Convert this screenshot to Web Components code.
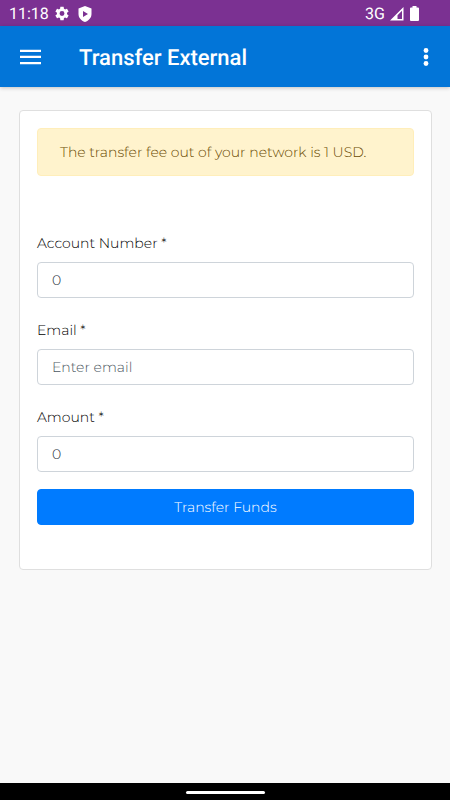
<!DOCTYPE html>
<html lang="en">
<head>
<meta charset="utf-8">
<meta name="viewport" content="width=device-width, initial-scale=1">
<title>Transfer External</title>
<style>
html, body { margin: 0; min-height: 100%; }
body { font-family: Montserrat, Inter, sans-serif; background: #f9f9f9; text-rendering: geometricPrecision; }
</style>
</head>
<body>
<transfer-app></transfer-app>
<script>
const define = (name, html, setup) => customElements.define(name, class extends HTMLElement {
  constructor() {
    super();
    this.attachShadow({ mode: 'open' }).innerHTML = html;
  }
  connectedCallback() { if (setup) setup(this, this.shadowRoot); }
});

define('status-bar', `
<style>
:host { display: flex; align-items: center; justify-content: space-between; box-sizing: border-box; height: 26px; padding: 1px 31px 0 9px; background: #7b3192; color: #fff; font: 16px/25px Roboto, sans-serif; }
div { display: flex; align-items: center; }
.left { gap: 6px; }
.right { gap: 4px; }
svg { display: block; fill: #fff; }
.shield { margin-left: 3px; }
.battery { margin-left: 2px; }
</style>
<div class="left"><span>11:18</span>
<svg width="14" height="15" viewBox="2 2 20 20"><path fill-rule="evenodd" d="M19.14 12.94c.04-.3.06-.61.06-.94s-.02-.64-.07-.94l2.03-1.58c.18-.14.23-.41.12-.61l-1.92-3.32c-.12-.22-.37-.29-.59-.22l-2.39.96c-.5-.38-1.03-.7-1.62-.94l-.36-2.54C14.36 2.57 14.16 2.4 13.92 2.4h-3.84c-.24 0-.43.17-.47.41l-.36 2.54c-.59.24-1.13.57-1.62.94l-2.39-.96c-.22-.08-.47 0-.59.22L2.74 8.87c-.12.21-.08.47.12.61l2.03 1.58c-.05.3-.09.63-.09.94s.02.64.07.94l-2.03 1.58c-.18.14-.23.41-.12.61l1.92 3.32c.12.22.37.29.59.22l2.39-.96c.5.38 1.03.7 1.62.94l.36 2.54c.05.24.24.41.48.41h3.84c.24 0 .44-.17.47-.41l.36-2.54c.59-.24 1.13-.56 1.62-.94l2.39.96c.22.08.47 0 .59-.22l1.92-3.32c.12-.22.07-.47-.12-.61zM12 15.500a3.500 3.500 0 1 1 0-7 3.500 3.500 0 0 1 0 7z"/></svg>
<svg class="shield" width="14" height="16" viewBox="0 0 14 16"><path fill-rule="evenodd" d="M7 0 13.500 2.400V8c0 3.800-2.500 6.500-6.500 8C3 14.500.5 11.800.5 8V2.400zM5 5v6L10 8z"/></svg></div>
<div class="right"><span>3G</span>
<svg width="15" height="15" viewBox="0 0 15 15"><path fill-rule="evenodd" d="M14.500 1v13.500H1zM13 4.800 8.500 9.300V13h4.500z"/></svg>
<svg class="battery" width="9" height="15" viewBox="0 0 9 15"><path d="M2.500 0h4v1.500H8q1 0 1 1V14q0 1-1 1H1q-1 0-1-1V2.500q0-1 1-1h1.500z"/></svg></div>`);

define('app-bar', `
<style>
:host { display: flex; align-items: center; box-sizing: border-box; height: 61px; padding: 0 14px 0 18px; background: #0275d8; color: #fff; box-shadow: 0 1px 4px rgba(0,0,0,.22); }
h1 { flex: 1; margin: 0 0 0 36px; padding-top: 4px; font: 500 22px/32px Roboto, sans-serif; }
button { display: flex; justify-content: center; border: 0; background: none; padding: 12px 0; cursor: pointer; }
.menu { width: 25px; } .more { width: 20px; }
svg { display: block; fill: #fff; }
</style>
<button class="menu" aria-label="Open menu"><svg width="21" height="16" viewBox="0 0 21 16"><path d="M0 .7h21v2.300H0zM0 6.800h21v2.300H0zM0 12.900h21v2.300H0z"/></svg></button>
<h1><slot></slot></h1>
<button class="more" aria-label="More options"><svg width="6" height="20" viewBox="0 0 6 20"><circle cx="3" cy="3.500" r="2.400"/><circle cx="3" cy="10" r="2.400"/><circle cx="3" cy="16.500" r="2.400"/></svg></button>`);

define('fee-alert', `
<style>
:host { display: block; box-sizing: border-box; padding: 13px 22px; border: 1px solid #ffeeba; border-radius: 4px; background: #fff3cd; color: #694900; font-size: 14px; line-height: 20px; }
</style><slot></slot>`);

define('form-field', `
<style>
:host { display: block; }
label { display: block; margin-bottom: 9px; color: #000; font-size: 14px; line-height: 20px; }
input { display: block; box-sizing: border-box; width: 100%; height: 36px; margin: 0; padding: 0 14px; border: 1px solid #ced4da; border-radius: 4px; background: #fff; color: #212b35; font: inherit; font-size: 14px; text-rendering: inherit; }
input::placeholder { color: #4c5761; opacity: 1; }
</style>
<label for="control"></label><input id="control">`, (host, root) => {
  root.querySelector('label').textContent = host.getAttribute('label');
  const input = root.querySelector('input');
  input.type = host.getAttribute('type') || 'text';
  input.value = host.getAttribute('value') || '';
  input.placeholder = host.getAttribute('placeholder') || '';
});

define('primary-button', `
<style>
:host { display: block; }
button { display: block; box-sizing: border-box; width: 100%; height: 36px; padding: 0; border: 1px solid #007bff; border-radius: 4px; background: #007bff; color: #fff; font: inherit; font-size: 14px; text-rendering: inherit; cursor: pointer; }
</style><button type="button"><slot></slot></button>`);

define('content-card', `
<style>
:host { display: block; padding: 17px 17px 44px; border: 1px solid #dfdfdf; border-radius: 4px; background: #fff; font-weight: 300; }
</style><slot></slot>`);

define('gesture-bar', `
<style>
:host { display: flex; align-items: center; justify-content: center; box-sizing: border-box; height: 17px; padding-top: 2px; background: #000; }
span { width: 79px; height: 3px; border-radius: 2px; background: #fff; }
</style><span></span>`);

define('transfer-app', `
<style>
:host { display: flex; flex-direction: column; min-height: 100vh; }
main { flex: 1; padding: 23px 18px 22px 19px; }
form { display: grid; gap: 22px; margin: 57px 0 17px; }
</style>
<status-bar></status-bar>
<app-bar>Transfer External</app-bar>
<main>
<content-card>
<fee-alert role="alert">The transfer fee out of your network is 1 USD.</fee-alert>
<form>
<form-field label="Account Number *" value="0"></form-field>
<form-field label="Email *" type="email" placeholder="Enter email"></form-field>
<form-field label="Amount *" value="0"></form-field>
</form>
<primary-button>Transfer Funds</primary-button>
</content-card>
</main>
<gesture-bar></gesture-bar>`);
</script>
</body>
</html>
